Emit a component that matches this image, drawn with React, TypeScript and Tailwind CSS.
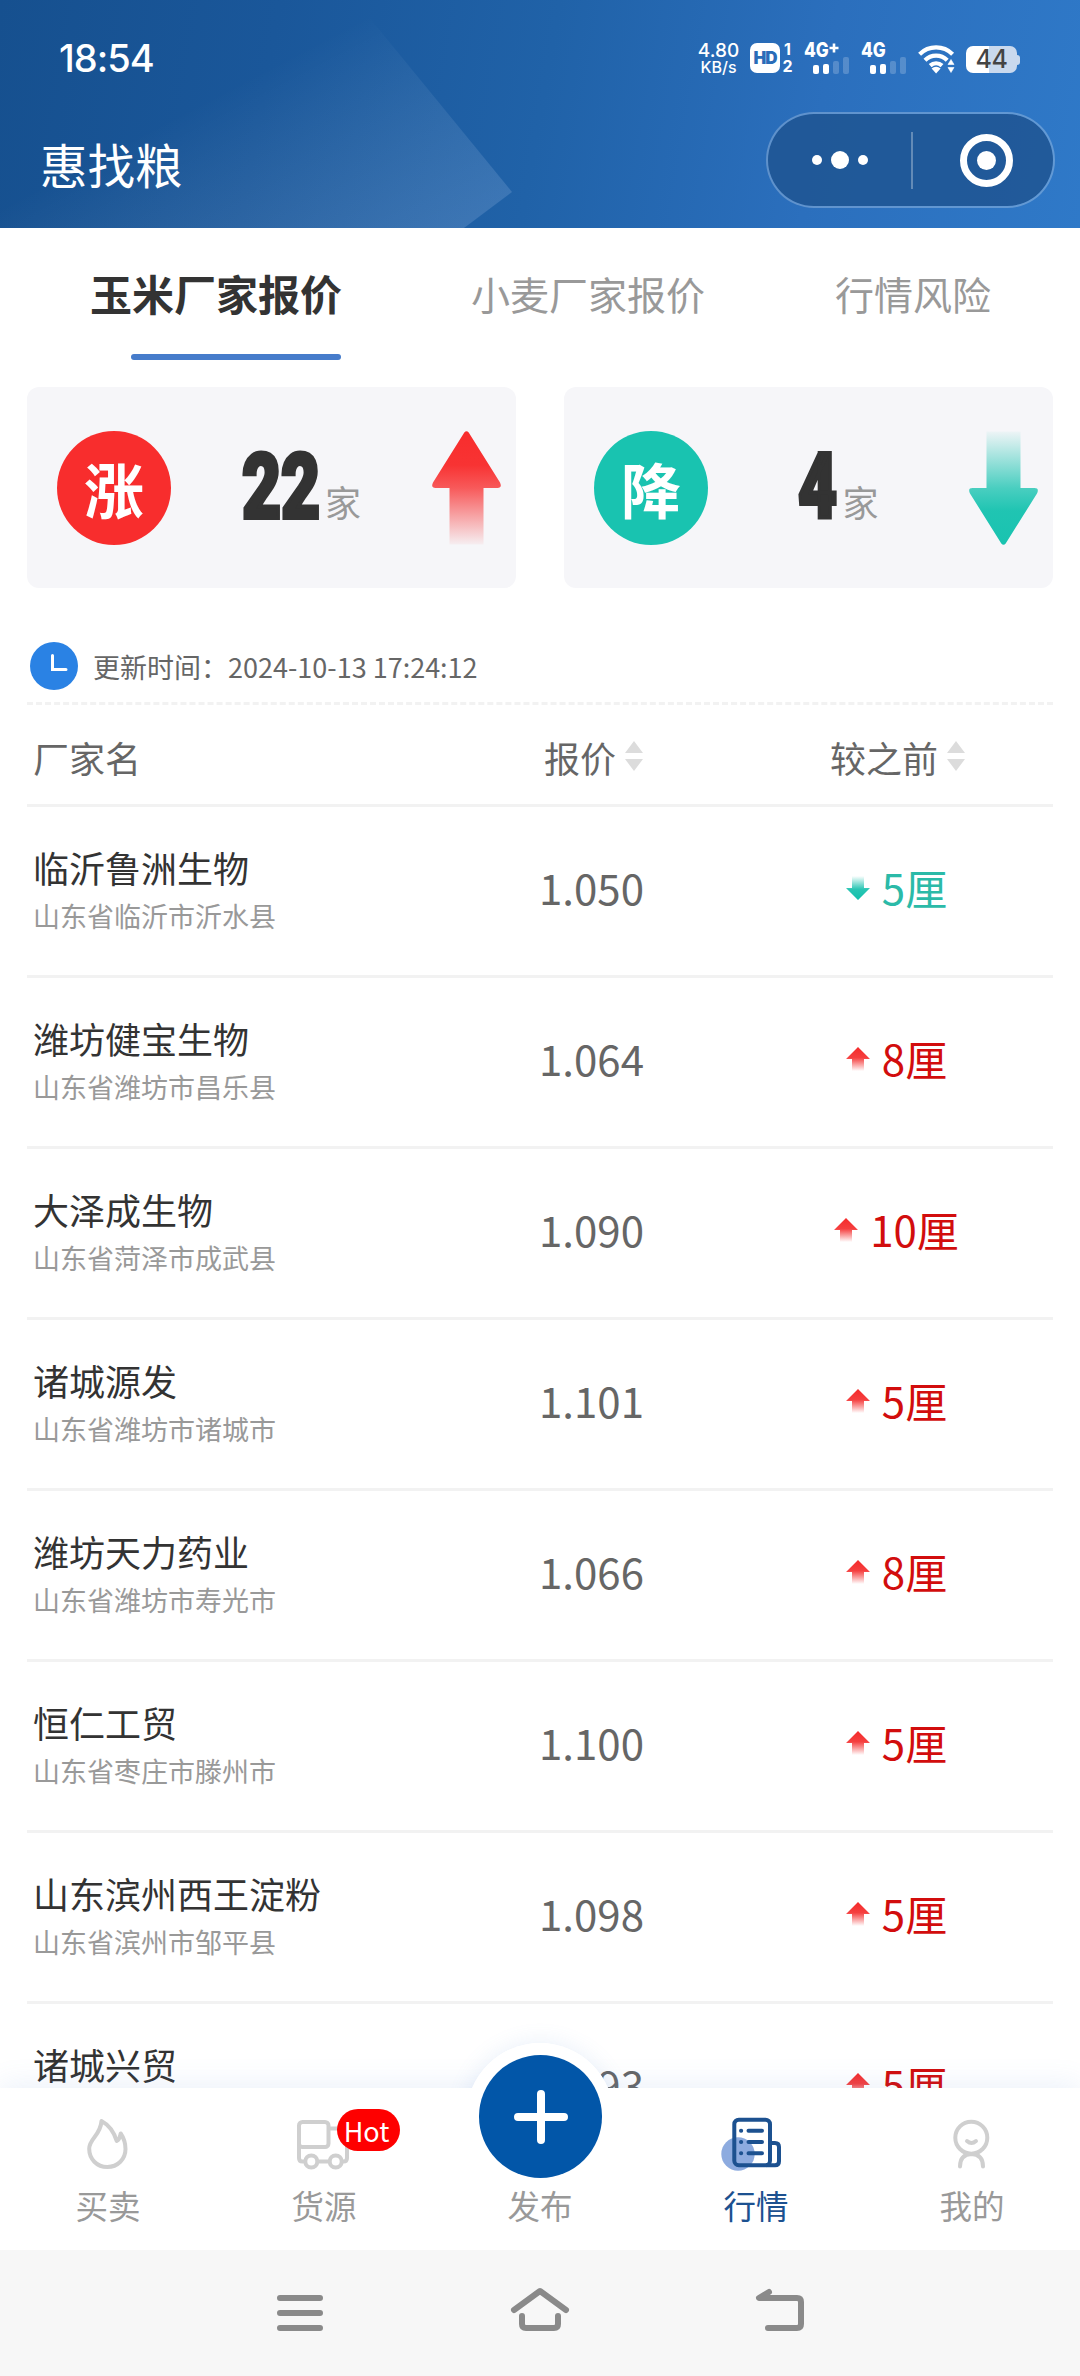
import React from "react";

type Row = { name: string; place: string; price: string; diff: string; up: boolean };

const rows: Row[] = [
  { name: "临沂鲁洲生物", place: "山东省临沂市沂水县", price: "1.050", diff: "5厘", up: false },
  { name: "潍坊健宝生物", place: "山东省潍坊市昌乐县", price: "1.064", diff: "8厘", up: true },
  { name: "大泽成生物", place: "山东省菏泽市成武县", price: "1.090", diff: "10厘", up: true },
  { name: "诸城源发", place: "山东省潍坊市诸城市", price: "1.101", diff: "5厘", up: true },
  { name: "潍坊天力药业", place: "山东省潍坊市寿光市", price: "1.066", diff: "8厘", up: true },
  { name: "恒仁工贸", place: "山东省枣庄市滕州市", price: "1.100", diff: "5厘", up: true },
  { name: "山东滨州西王淀粉", place: "山东省滨州市邹平县", price: "1.098", diff: "5厘", up: true },
  { name: "诸城兴贸", place: "", price: "1.093", diff: "5厘", up: true },
];

function Signal({ label, plus }: { label: string; plus?: boolean }) {
  return (
    <div className="relative h-[31px] w-[44px]">
      <span className="absolute -top-[3px] left-0 origin-left scale-x-[0.86] font-['Inter'] text-[20px] leading-[20px] font-extrabold">
        {label}
      </span>
      {plus && (
        <svg className="absolute top-0 left-[25px]" width="10" height="10" viewBox="0 0 10 10" stroke="#fff" strokeWidth="2.600">
          <path d="M0.500 5H9.500M5 .500V9.500" />
        </svg>
      )}
      <div className="absolute bottom-0 left-[9px] flex items-end gap-1">
        <span className="h-[9px] w-[6px] rounded-[2px] bg-white" />
        <span className="h-[10px] w-[6px] rounded-[2px] bg-white" />
        <span className="h-[13px] w-[6px] rounded-[2px] bg-white/20" />
        <span className="h-[17px] w-[6px] rounded-[2px] bg-white/20" />
      </div>
    </div>
  );
}

function StatusBar() {
  return (
    <div className="flex h-[98px] items-start pt-[43px] pl-[59px] text-white">
      <span className="-mt-[5px] w-[640px] font-['Inter'] text-[38px] leading-[40px] font-medium tracking-[-1px]">
        18:54
      </span>
      <div className="flex w-[39px] flex-col items-center font-['Inter'] font-medium">
        <span className="-mt-px text-[19px] leading-[17px]">4.80</span>
        <span className="text-[16px] leading-[16px]">KB/s</span>
      </div>
      <div className="ml-[12px] flex h-[30px] w-[30px] items-center justify-center rounded-[7px] bg-white">
        <span className="font-['Inter'] text-[17px] leading-none font-black tracking-[-1px] text-[#2a6cb8]">HD</span>
      </div>
      <div className="ml-[2px] flex w-[11px] flex-col items-center font-['Inter'] text-[16px] leading-[16px] font-bold">
        <span className="-mt-[2px]">1</span>
        <span className="mt-[1px]">2</span>
      </div>
      <div className="ml-[11px]">
        <Signal label="4G" plus />
      </div>
      <div className="ml-[13px]">
        <Signal label="4G" />
      </div>
      <svg className="ml-[13px]" width="38" height="31" viewBox="0 0 38 31" fill="none">
        <g stroke="#fff" strokeWidth="4.200">
          <path d="M1.600 11.200a23.500 23.500 0 0 1 33 0" />
          <path d="M7 17.200a15.800 15.800 0 0 1 22.200 0" />
          <path d="M12.200 22.600a8.600 8.600 0 0 1 11.800 0" />
        </g>
        <path d="M13.600 25.600a6.500 6.500 0 0 1 9 0L18.100 30.500z" fill="#fff" />
        <path d="M30 21.500l3-5 3 5zM30 24.500l3 5 3-5z" fill="#fff" stroke="#fff" strokeWidth=".6" />
      </svg>
      <div className="mt-[3px] ml-[10px] flex items-center">
        <div className="flex h-[27px] w-[51px] items-center justify-center rounded-[7px] bg-[linear-gradient(90deg,#fff_45%,#c9d9ee_45%)]">
          <span className="font-['Inter'] text-[25px] leading-none font-medium tracking-[-0.5px] text-[#444]">44</span>
        </div>
        <span className="h-[10px] w-[3px] rounded-r-[3px] bg-[#c9d9ee]" />
      </div>
    </div>
  );
}

function Header() {
  return (
    <header className="relative h-[228px] shrink-0 overflow-hidden bg-[linear-gradient(100deg,#16508f_0%,#1a579a_25%,#2062a8_50%,#2b6fbd_75%,#2f79c8_100%)]">
      <svg className="absolute top-0 left-0" width="540" height="228" viewBox="0 0 540 228">
        <defs>
          <linearGradient id="shine" gradientUnits="userSpaceOnUse" x1="320" y1="40" x2="430" y2="250">
            <stop offset="0" stopColor="#fff" stopOpacity="0" />
            <stop offset="1" stopColor="#cfe0ff" stopOpacity=".17" />
          </linearGradient>
        </defs>
        <path d="M0 0H355L512 192L464 228H0Z" fill="url(#shine)" />
      </svg>
      <div className="relative">
        <StatusBar />
        <div className="flex items-start justify-between pt-[14px] pr-[25px] pl-10">
          <h1 className="mt-[17px] text-[47.5px] leading-[70px] font-normal text-white">惠找粮</h1>
          <div className="flex h-24 w-[289px] items-center rounded-full border-2 border-white/25 bg-[#1f5592]/85 bg-clip-padding">
            <div className="flex w-[143px] items-center justify-center gap-[9px]">
              <span className="size-[10px] rounded-full bg-white" />
              <span className="size-[18px] rounded-full bg-white" />
              <span className="size-[10px] rounded-full bg-white" />
            </div>
            <span className="h-[57px] w-[2px] bg-white/30" />
            <div className="flex flex-1 items-center justify-center pl-[6px]">
              <div className="flex size-[53px] items-center justify-center rounded-full border-[7px] border-white">
                <span className="size-[19px] rounded-full bg-white" />
              </div>
            </div>
          </div>
        </div>
      </div>
    </header>
  );
}

function Tabs() {
  return (
    <nav className="flex h-[159px] shrink-0 items-start pt-[35px] pl-[90px] text-[39px] leading-[60px] whitespace-nowrap text-[#999]">
      <div className="w-[252px] text-[42px] font-bold text-[#333]">
        玉米厂家报价
        <div className="mt-[31px] ml-[41px] h-[6px] w-[210px] rounded-full bg-[#467ccb]" />
      </div>
      <div className="ml-[129px] w-[234px]">小麦厂家报价</div>
      <div className="ml-[130px]">行情风险</div>
    </nav>
  );
}

function BigArrow({ up }: { up: boolean }) {
  const color = up ? "#f82d2d" : "#19c3b0";
  const id = up ? "bigUp" : "bigDown";
  return (
    <svg width="69" height="114" viewBox="0 0 69 114" className={up ? "" : "rotate-180"}>
      <defs>
        <linearGradient id={id} x1="0" y1="0" x2="0" y2="1">
          <stop offset="0" stopColor={color} />
          <stop offset=".3" stopColor={color} stopOpacity=".97" />
          <stop offset=".5" stopColor={color} stopOpacity=".78" />
          <stop offset="1" stopColor={color} stopOpacity=".04" />
        </linearGradient>
      </defs>
      <path
        d="M32.300 1.500Q34.500 -1 36.700 1.500L68 51.500Q70.500 57 65.500 57H51.500V113.500H17.500V57H3.500Q-1.500 57 1 51.500Z"
        fill={`url(#${id})`}
      />
    </svg>
  );
}

function Card({ label, count, up }: { label: string; count: string; up: boolean }) {
  return (
    <div className="flex h-[201px] w-[489px] items-center justify-between rounded-xl bg-[#f6f6f9] pr-[15px] pl-[30px]">
      <div
        className={
          "flex size-[114px] items-center justify-center rounded-full text-[60px] leading-none font-bold text-white " +
          (up ? "bg-[#f82d2d]" : "bg-[#19c3b0]")
        }
      >
        {label}
      </div>
      <div className="flex items-end">
        <span className={"block h-[70px] " + (up ? "w-[79px]" : "w-[40px]")}>
          <span className="inline-block origin-left scale-x-[0.75] font-['Roboto'] text-[90px] leading-[70px] font-black text-[#333] [-webkit-text-stroke:4px_#333]">
            {count}
          </span>
        </span>
        <span className="mb-[2px] ml-[4px] text-[36px] leading-[40px] text-[#999]">家</span>
      </div>
      <BigArrow up={up} />
    </div>
  );
}

function SortIcon() {
  return (
    <svg className="-mt-[2px] ml-[9px]" width="18" height="30" viewBox="0 0 18 30" fill="#dcdcdc">
      <path d="M0 12L9 0L18 12ZM0 18H18L9 30Z" />
    </svg>
  );
}

function SmallArrow({ up }: { up: boolean }) {
  const color = up ? "#f42a2a" : "#12bfab";
  const id = up ? "smallUp" : "smallDown";
  return (
    <svg width="24" height="24" viewBox="0 0 24 24" className={up ? "" : "rotate-180"}>
      <defs>
        <linearGradient id={id} x1="0" y1="0" x2="0" y2="1">
          <stop offset="0" stopColor={color} />
          <stop offset=".45" stopColor={color} stopOpacity=".9" />
          <stop offset="1" stopColor={color} stopOpacity="0" />
        </linearGradient>
      </defs>
      <path d="M12 0L24 12H18V24H6V12H0Z" fill={`url(#${id})`} />
    </svg>
  );
}

function PriceRow({ row }: { row: Row }) {
  return (
    <div className="flex h-[171px] shrink-0 border-b-[3px] border-[#f2f2f2]">
      <div className="w-[412px] pt-[35px] pl-[6px] whitespace-nowrap">
        <div className="text-[36px] leading-[50px] text-[#333]">{row.name}</div>
        <div className="mt-[4px] text-[27px] leading-[40px] text-[#999]">{row.place}</div>
      </div>
      <div className="w-[305px] pt-[50px] text-center text-[42px] leading-[60px] text-[#666]">{row.price}</div>
      <div
        className={
          "flex w-[305px] items-start justify-center gap-[12px] pt-[50px] text-[42px] leading-[60px] " +
          (row.up ? "text-[#d20d0d]" : "text-[#2bbaa8]")
        }
      >
        <span className="mt-[19px] flex">
          <SmallArrow up={row.up} />
        </span>
        {row.diff}
      </div>
    </div>
  );
}

function FlameIcon() {
  return (
    <svg width="60" height="60" viewBox="0 0 60 60" fill="none" stroke="#cfcfcf" strokeWidth="4" strokeLinejoin="round">
      <path d="M23.500 10C31 14 36 21 38.700 30C41 29 42 26 42.700 22.500C46.500 28 47.500 33 47.500 38C47.500 48 39.800 56 29.300 56S11.200 48 11.200 37.800C11.200 27 22.500 25 23.500 10Z" />
    </svg>
  );
}

function TruckIcon() {
  return (
    <svg width="60" height="60" viewBox="0 0 60 60" fill="none" stroke="#cfcfcf" strokeWidth="4">
      <rect x="5" y="11" width="29.500" height="25" rx="3.500" />
      <path d="M5 33V47Q5 50.500 8.500 50.500H11M23.500 50.500H35.500M48 50.500H49.500Q53 50.500 53 47V26Q53 17.500 45 17.500H35" />
      <circle cx="17.300" cy="50.500" r="6" />
      <circle cx="41.700" cy="50.500" r="6" />
    </svg>
  );
}

function MarketIcon() {
  return (
    <svg className="overflow-visible" width="60" height="60" viewBox="0 0 60 60" fill="none">
      <circle cx="12" cy="43" r="16.700" fill="#8dabdf" />
      <g stroke="#1c5190" strokeWidth="4">
        <rect x="8.300" y="8.700" width="35.700" height="45.500" rx="4.500" />
        <path d="M44 32H49Q53 32 53 36V50.200Q53 54.200 49 54.200H40" />
      </g>
      <path
        d="M15 19.700H15.200M22.500 19.700H36M15 31H15.200M22.500 31H36M15 42.200H15.200M22.500 42.200H36"
        stroke="#1c5190"
        strokeWidth="4"
        strokeLinecap="round"
      />
    </svg>
  );
}

function PersonIcon() {
  return (
    <svg width="60" height="60" viewBox="0 0 60 60" fill="none" stroke="#cfcfcf" strokeWidth="4" strokeLinecap="round">
      <circle cx="29.300" cy="26.700" r="16" />
      <path d="M25 30Q29.500 34 34 30M18 55.500Q18 43.500 29.500 43Q41 43.500 41 55.500" />
    </svg>
  );
}

function TabItem({ label, icon, active }: { label: string; icon?: React.ReactNode; active?: boolean }) {
  return (
    <div className="flex w-[216px] flex-col items-center">
      <div className="flex h-[93px] items-start justify-center pt-[23px]">{icon}</div>
      <span className={"text-[32.5px] leading-[48px] " + (active ? "text-[#1c5190]" : "text-[#999]")}>{label}</span>
    </div>
  );
}

function TabBar() {
  return (
    <div className="relative z-10 h-[162px] shrink-0">
      <div className="absolute -top-[45px] left-[466px] size-[148px] rounded-full bg-white shadow-[0_0_22px_rgba(90,140,210,0.14)]" />
      <div className="absolute inset-0 bg-white shadow-[0_-4px_26px_rgba(90,140,210,0.12)] [clip-path:inset(-40px_0_0_0)]" />
      <div className="absolute -top-[45px] left-[466px] size-[148px] rounded-full bg-white" />
      <div className="relative flex">
        <TabItem label="买卖" icon={<FlameIcon />} />
        <div className="relative">
          <TabItem label="货源" icon={<TruckIcon />} />
          <span className="absolute top-[21px] left-[121px] flex h-[42px] w-[63px] items-center justify-center rounded-full bg-[#fe0000] pr-[4px] text-[27px] leading-none text-white">
            Hot
          </span>
        </div>
        <div className="relative">
          <TabItem label="发布" />
          <span className="absolute -top-[33px] left-[47px] flex size-[123px] items-center justify-center rounded-full bg-[#0256a8]">
            <svg width="60" height="60" viewBox="0 0 60 60" stroke="#fff" strokeWidth="8" strokeLinecap="round">
              <path d="M7 30H53M30 7V53" />
            </svg>
          </span>
        </div>
        <TabItem label="行情" icon={<MarketIcon />} active />
        <TabItem label="我的" icon={<PersonIcon />} />
      </div>
    </div>
  );
}

function SystemNav() {
  return (
    <div className="flex h-[126px] shrink-0 items-start justify-center gap-[180px] bg-[#f7f7f7] pt-[33px]">
      <svg width="60" height="60" viewBox="0 0 60 60" stroke="#8a8a8a" strokeWidth="6" strokeLinecap="round">
        <path d="M10 15H50M10 30H50M10 45H50" />
      </svg>
      <svg width="60" height="60" viewBox="0 0 60 60" fill="none" stroke="#8a8a8a" strokeWidth="6" strokeLinecap="round" strokeLinejoin="round">
        <path d="M4 27L30 8L56 27M12 33V41Q12 45 16 45H44Q48 45 48 41V33" />
      </svg>
      <svg width="60" height="60" viewBox="0 0 60 60" fill="none" stroke="#8a8a8a" strokeWidth="6" strokeLinecap="round" strokeLinejoin="round">
        <path d="M19 9L9 15H47Q51 15 51 19V41Q51 45 47 45H18" />
      </svg>
    </div>
  );
}

export default function App() {
  return (
    <div className="flex h-[2376px] w-[1080px] flex-col overflow-hidden bg-white font-['Noto_Sans_CJK_SC',sans-serif]">
      <Header />
      <div className="flex h-[1860px] shrink-0 flex-col overflow-hidden">
        <Tabs />
        <div className="flex shrink-0 justify-between px-[27px]">
          <Card label="涨" count="22" up />
          <Card label="降" count="4" up={false} />
        </div>
        <div className="mx-[27px] mt-[48px] flex h-[69px] shrink-0 items-start border-b-[3px] border-dashed border-[#f2f2f2] pt-[6px] pl-[3px]">
          <svg width="48" height="48" viewBox="0 0 48 48">
            <circle cx="24" cy="24" r="24" fill="#2a82e4" />
            <path d="M22.500 13.500V27.500H36" fill="none" stroke="#fff" strokeWidth="3" strokeLinecap="round" />
          </svg>
          <span className="ml-[15px] text-[27px] leading-[50px] text-[#666]">更新时间：2024-10-13 17:24:12</span>
        </div>
        <div className="mx-[27px] flex h-[102px] shrink-0 items-center border-b-[3px] border-[#f2f2f2] pt-[5px] text-[36px] leading-[60px] text-[#666]">
          <div className="w-[412px] pl-[6px]">厂家名</div>
          <div className="flex w-[309px] items-center justify-center">
            报价
            <SortIcon />
          </div>
          <div className="flex w-[299px] items-center justify-center">
            较之前
            <SortIcon />
          </div>
        </div>
        <div className="mx-[27px] flex flex-col">
          {rows.map((r) => (
            <PriceRow key={r.name} row={r} />
          ))}
        </div>
      </div>
      <TabBar />
      <SystemNav />
    </div>
  );
}
